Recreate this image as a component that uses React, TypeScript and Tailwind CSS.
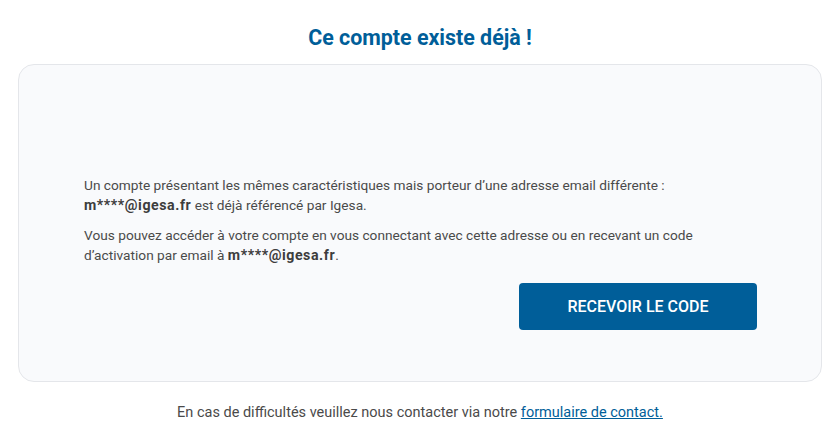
const ButtonCode = () => (
  <button
    type="button"
    className="h-[47px] w-[238px] rounded-[4px] bg-[#005e99] text-[16px] font-medium uppercase text-white"
  >
    Recevoir le code
  </button>
);

const Email = () => (
  <strong className="text-[14.2px] font-bold tracking-[0.55px] text-[#3d3d3d]">m****@igesa.fr</strong>
);

export default function App() {
  return (
    <div className="min-h-screen bg-white pl-[18px] pr-[14px] pt-[24px] font-['Roboto',sans-serif] text-[14px] leading-[20px] text-[#4a4a4a]">
      <h1 className="text-center text-[21.4px] font-bold leading-[28px] text-[#005e99]">
        Ce compte existe déjà !
      </h1>
      <div className="mt-[12px] rounded-[16px] border border-[#e4e6ea] bg-[#f9fafc] pb-[51px] pl-[65px] pr-[64px] pt-[110px] text-[13.7px]">
        <p>
          Un compte présentant les mêmes caractéristiques mais porteur d’une adresse email différente :
          <br />
          <Email /> est déjà référencé par Igesa.
        </p>
        <p className="mt-[10px]">
          Vous pouvez accéder à votre compte en vous connectant avec cette adresse ou en recevant un code
          <br />
          d’activation par email à <Email />.
        </p>
        <div className="mt-[18px] flex justify-end">
          <ButtonCode />
        </div>
      </div>
      <p className="mt-[21px] text-center text-[14.5px]">
        En cas de difficultés veuillez nous contacter via notre{" "}
        <a href="#" className="text-[#005e99] underline">
          formulaire de contact.
        </a>
      </p>
    </div>
  );
}
